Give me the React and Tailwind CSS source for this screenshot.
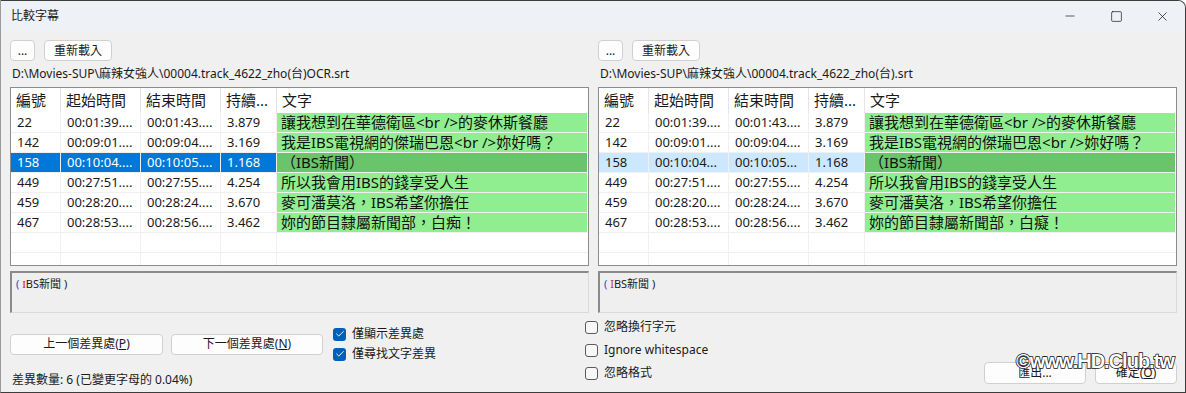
import { Minus, Square, X, Check } from "lucide-react";

const ROWS = [
  { id: "22", start: "00:01:39....", end: "00:01:43....", dur: "3.879", left: "讓我想到在華德衛區<br />的麥休斯餐廳", right: "讓我想到在華德衛區<br />的麥休斯餐廳" },
  { id: "142", start: "00:09:01....", end: "00:09:04....", dur: "3.169", left: "我是IBS電視網的傑瑞巴恩<br />妳好嗎？", right: "我是IBS電視網的傑瑞巴恩<br />妳好嗎？" },
  { id: "158", start: "00:10:04....", end: "00:10:05....", dur: "1.168", left: "（IBS新聞）", right: "（IBS新聞）", sel: true },
  { id: "449", start: "00:27:51....", end: "00:27:55....", dur: "4.254", left: "所以我會用IBS的錢享受人生", right: "所以我會用IBS的錢享受人生" },
  { id: "459", start: "00:28:20....", end: "00:28:24....", dur: "3.670", left: "麥可潘莫洛，IBS希望你擔任", right: "麥可潘莫洛，IBS希望你擔任" },
  { id: "467", start: "00:28:53....", end: "00:28:56....", dur: "3.462", left: "妳的節目隸屬新聞部，白痴！", right: "妳的節目隸屬新聞部，白癡！" },
];

const ui = "font-['Noto_Sans','Noto_Sans_CJK_TC',sans-serif]";

function Btn({ children, className = "" }) {
  return (
    <div
      className={`h-[21px] flex items-center justify-center bg-[#fdfdfd] border border-[#d0d0d0] rounded-[4px] text-[12px] text-[#1a1a1a] ${className}`}
    >
      {children}
    </div>
  );
}

function CheckBox({ checked, label }) {
  return (
    <div className="flex items-center gap-[6px] text-[12px] text-[#1a1a1a]">
      {checked ? (
        <span className="w-[13px] h-[13px] rounded-[3px] bg-[#005fb8] flex items-center justify-center">
          <Check size={10} strokeWidth={2.2} className="text-white" />
        </span>
      ) : (
        <span className="w-[13px] h-[13px] rounded-[3px] border border-[#5a5a5a] bg-[#f7f7f7]" />
      )}
      <span>{label}</span>
    </div>
  );
}

function Cell({ w, children }) {
  return (
    <div className={`${w} shrink-0 h-full flex items-center px-[6px] border-r border-[#f0f0f0] whitespace-nowrap overflow-hidden`}>
      {children}
    </div>
  );
}

function Panel({ side, path }) {
  const isLeft = side === "left";
  return (
    <div className="w-[579px] flex flex-col">
      {/* buttons */}
      <div className="flex gap-[9px] mt-[9px]">
        <Btn className="w-[25px]">...</Btn>
        <Btn className="w-[68px]">重新載入</Btn>
      </div>
      {/* path */}
      <div className="h-[26px] flex items-center pl-[2px] text-[12px] text-[#1a1a1a] whitespace-nowrap">
        {path}
      </div>
      {/* list */}
      <div className="h-[179px] border border-[#8c8c8c] bg-white overflow-hidden">
        <div className="h-[25px] flex text-[15px] text-[#1a1a1a] leading-none">
          <div className="w-[50px] px-[5px] flex items-center border-r border-[#e5e5e5]">編號</div>
          <div className="w-[80px] px-[5px] flex items-center border-r border-[#e5e5e5]">起始時間</div>
          <div className="w-[80px] px-[5px] flex items-center border-r border-[#e5e5e5]">結束時間</div>
          <div className="w-[56px] px-[5px] flex items-center border-r border-[#e5e5e5]">持續...</div>
          <div className="flex-1 px-[5px] flex items-center">文字</div>
        </div>
        {ROWS.map((r) => {
          const selBg = r.sel ? (isLeft ? "bg-[#0078d7] text-white" : "bg-[#cce8ff] text-[#1a1a1a]") : "text-[#1a1a1a]";
          return (
            <div key={r.id} className="h-[20px] flex border-b border-[#f0f0f0] text-[13px]">
              <div className={`flex shrink-0 h-full ${selBg}`}>
                <Cell w="w-[50px]">{r.id}</Cell>
                <Cell w="w-[80px]">{r.sel && !isLeft ? "00:10:04..." : r.start}</Cell>
                <Cell w="w-[80px]">{r.sel && !isLeft ? "00:10:05..." : r.end}</Cell>
                <Cell w="w-[56px]">{r.dur}</Cell>
              </div>
              <div
                className={`w-[310px] h-full flex items-center px-[4px] text-[15px] leading-none text-[#111] whitespace-nowrap overflow-hidden ${
                  r.sel ? "bg-[#6ac46a]" : "bg-[#90ee90]"
                }`}
              >
                {isLeft ? r.left : r.right}
              </div>
            </div>
          );
        })}
        {[0, 1].map((i) => (
          <div key={i} className="h-[20px] flex border-b border-[#f0f0f0]">
            <div className="w-[50px] border-r border-[#f0f0f0]" />
            <div className="w-[80px] border-r border-[#f0f0f0]" />
            <div className="w-[80px] border-r border-[#f0f0f0]" />
            <div className="w-[56px] border-r border-[#f0f0f0]" />
          </div>
        ))}
      </div>
      {/* preview box */}
      <div className="mt-[5px] h-[42px] border-t-2 border-l-2 border-t-[#8a8a8a] border-l-[#8a8a8a] border-r border-b border-r-[#dadada] border-b-[#dadada] bg-[#efefef] px-[4px] pt-[3px] text-[11px] leading-[16px]">
        <span className="text-[#2050c0]">( </span>
        <span className={isLeft ? "text-[#e01010] font-['Liberation_Serif',serif]" : "text-[#c03060]"}>I</span>
        <span className="text-[#1a1a1a]">BS新聞</span>
        <span className="text-[#1a1a1a]"> )</span>
      </div>
    </div>
  );
}

export default function App() {
  return (
    <div className={`relative w-[1186px] h-[393px] bg-[#f0f0f0] border border-[#3c3c3c] border-l-[#9a9a9a] rounded-tr-[8px] overflow-hidden flex flex-col ${ui}`}>
      {/* title bar */}
      <div className="h-[30px] shrink-0 bg-[#eef2f6] flex items-center">
        <span className="pl-[10px] text-[12px] text-[#1a1a1a]">比較字幕</span>
        <div className="ml-auto flex items-center h-full text-[#1a1a1a]">
          <div className="w-[46px] h-full flex items-center justify-center">
            <Minus size={14} strokeWidth={1.2} />
          </div>
          <div className="w-[46px] h-full flex items-center justify-center">
            <Square size={13} strokeWidth={1.3} />
          </div>
          <div className="w-[46px] h-full flex items-center justify-center">
            <X size={15} strokeWidth={1.2} />
          </div>
        </div>
      </div>

      {/* two panels */}
      <div className="flex gap-[9px] pl-[9px]">
        <Panel side="left" path="D:\Movies-SUP\麻辣女強人\00004.track_4622_zho(台)OCR.srt" />
        <Panel side="right" path="D:\Movies-SUP\麻辣女強人\00004.track_4622_zho(台).srt" />
      </div>

      {/* bottom controls */}
      <div className="flex flex-1 pl-[9px]">
        <div className="w-[575px] flex flex-col">
          <div className="flex items-center h-[40px] mt-[11px]">
            <Btn className="w-[153px]">
              上一個差異處(<span className="underline">P</span>)
            </Btn>
            <Btn className="w-[152px] ml-[8px]">
              下一個差異處(<span className="underline">N</span>)
            </Btn>
            <div className="flex flex-col ml-[10px]">
              <div className="h-[20px] flex items-center">
                <CheckBox checked label="僅顯示差異處" />
              </div>
              <div className="h-[20px] flex items-center">
                <CheckBox checked label="僅尋找文字差異" />
              </div>
            </div>
          </div>
          <div className="mt-[6px] h-[20px] flex items-center pl-[2px] text-[12px] text-[#1a1a1a]">
            差異數量: 6 (已變更字母的 0.04%)
          </div>
        </div>
        <div className="flex flex-col gap-[1px] mt-[3px]">
          <div className="h-[22px] flex items-center">
            <CheckBox label="忽略換行字元" />
          </div>
          <div className="h-[22px] flex items-center">
            <CheckBox label="Ignore whitespace" />
          </div>
          <div className="h-[22px] flex items-center">
            <CheckBox label="忽略格式" />
          </div>
        </div>
        <div className="flex-1 flex justify-end items-end gap-[9px] pb-[8px] pr-[8px]">
          <Btn className="w-[102px] h-[22px]">匯出...</Btn>
          <Btn className="w-[82px] h-[22px]">
            確定(<span className="underline">O</span>)
          </Btn>
        </div>
      </div>

      {/* watermark */}
      <div
        className="absolute left-[1015px] top-[345px] text-[20px] font-bold tracking-[-1px] text-white font-['Liberation_Sans',sans-serif]"
        style={{ WebkitTextStroke: "1.5px #111", paintOrder: "stroke fill" }}
      >
        ©www.HD.Club.tw
      </div>
    </div>
  );
}
